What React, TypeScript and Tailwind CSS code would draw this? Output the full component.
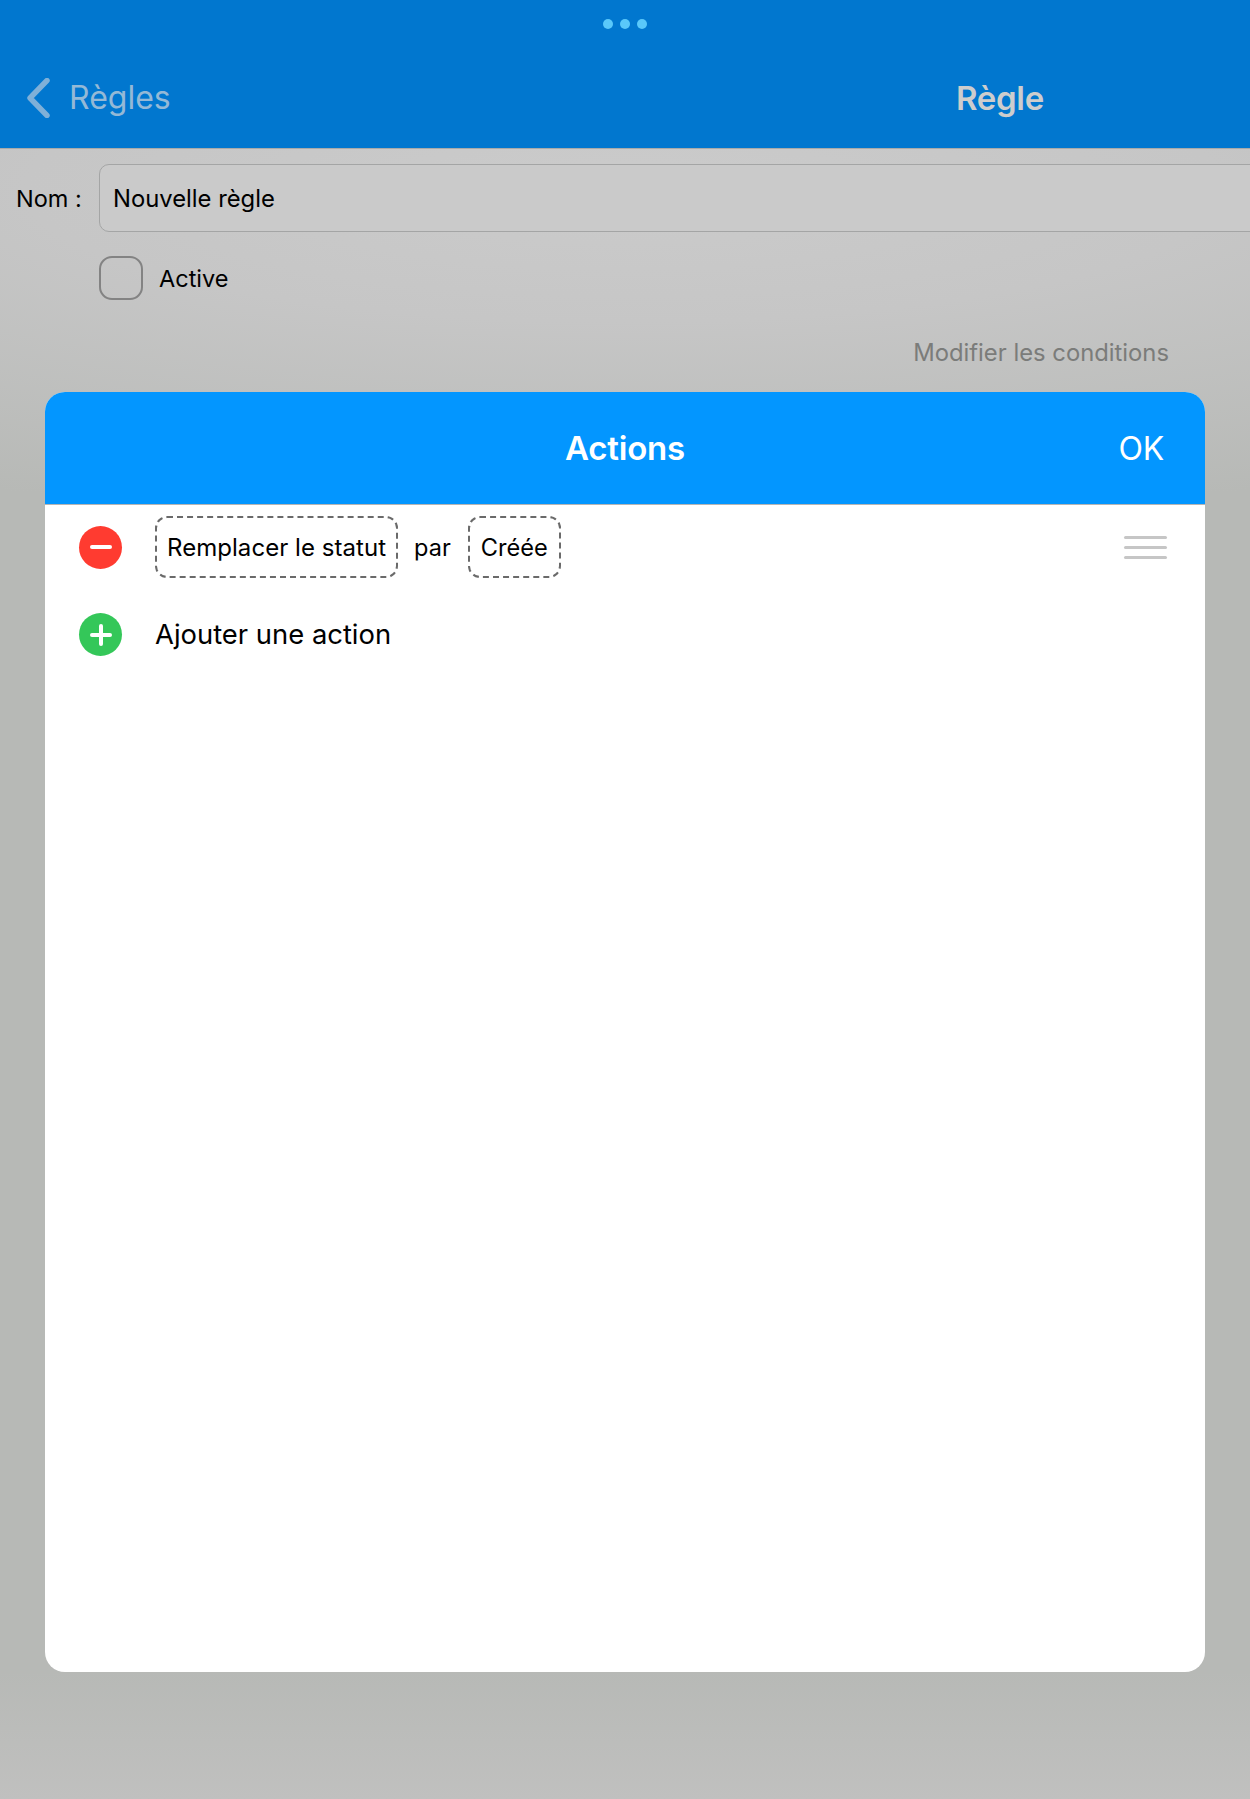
export default function App() {
  return (
    <div className="relative h-[1799px] w-[1250px] overflow-hidden font-['Inter',sans-serif] text-black bg-[linear-gradient(180deg,transparent_1672px,#c0c0bf_1799px),radial-gradient(ellipse_1500px_330px_at_50%_190px,#cbcbcb_0%,#c6c6c6_40%,#b7b9b6_100%)]">
      <header className="h-[149px] border-b border-[#a8aaaa] bg-[#0177cf]">
        <div className="flex justify-center gap-[7px] pt-[19px]">
          <span className="h-[10px] w-[10px] rounded-full bg-[#5ac8fa]" />
          <span className="h-[10px] w-[10px] rounded-full bg-[#5ac8fa]" />
          <span className="h-[10px] w-[10px] rounded-full bg-[#5ac8fa]" />
        </div>
        <div className="flex items-center pt-[49px]">
          <svg width="24" height="40" viewBox="0 0 24 40" className="ml-[26px]" fill="none">
            <path d="M21 2.5 L4 20 L21 37.5" stroke="#7fb0d8" strokeWidth="5.4" strokeLinecap="round" strokeLinejoin="round" />
          </svg>
          <span className="ml-[19px] w-[887px] text-[32px] leading-[40px] text-[#94b9d6]">Règles</span>
          <span className="text-[33px] leading-[40px] font-semibold tracking-[-0.3px] text-[#cdcdcd]">Règle</span>
        </div>
      </header>
      <div className="flex items-center pt-[15px]">
        <span className="ml-[16px] w-[83px] shrink-0 whitespace-nowrap pt-[2px] text-[23.5px] leading-[30px]">Nom :</span>
        <div className="flex h-[68px] w-[1200px] shrink-0 items-center rounded-[10px] border border-[#a4a5a5] bg-[#cacaca] pl-[13px] pt-[2px] text-[23.8px]">Nouvelle règle</div>
      </div>
      <div className="ml-[99px] flex items-center pt-[24px]">
        <span className="h-[44px] w-[44px] rounded-[13px] border-[2px] border-[#838383]" />
        <span className="ml-[16px] pt-[2px] text-[23.5px]">Active</span>
      </div>
      <div className="flex justify-end pr-[81px] pt-[38px] text-[23.8px] leading-[30px] text-[#7b7c7a]">Modifier les conditions</div>

      <div className="absolute left-[45px] top-[392px] flex h-[1280px] w-[1160px] flex-col overflow-hidden rounded-[20px] bg-white">
        <div className="relative flex h-[113px] shrink-0 items-center justify-center border-b border-[#b5b5b5] bg-[#0396ff] pt-[2px] text-white">
          <span className="text-[33px] font-semibold tracking-[-0.2px]">Actions</span>
          <span className="absolute right-[41px] text-[32px] tracking-[-0.2px]">OK</span>
        </div>
        <div className="flex items-center pt-[11px]">
          <span className="ml-[34px] flex h-[43px] w-[43px] items-center justify-center rounded-full bg-[#ff3b30]">
            <span className="h-[4px] w-[22px] rounded-full bg-white" />
          </span>
          <span className="ml-[33px] flex h-[62px] items-center rounded-[12px] border-[2px] border-dashed border-[#6a6a6a] px-[10px] pt-[2px] text-[24px] tracking-[0.05px]">Remplacer le statut</span>
          <span className="ml-[16px] pt-[2px] text-[23.5px]">par</span>
          <span className="ml-[17px] flex h-[62px] items-center rounded-[12px] border-[2px] border-dashed border-[#6a6a6a] px-[11px] pt-[2px] text-[23.6px]">Créée</span>
          <span className="ml-auto mr-[38px] flex w-[43px] flex-col gap-[7px]">
            <span className="h-[3px] rounded-full bg-[#c6c6c6]" />
            <span className="h-[3px] rounded-full bg-[#c6c6c6]" />
            <span className="h-[3px] rounded-full bg-[#c6c6c6]" />
          </span>
        </div>
        <div className="flex items-center pt-[35px]">
          <span className="relative ml-[34px] flex h-[43px] w-[43px] items-center justify-center rounded-full bg-[#34c759]">
            <span className="h-[4px] w-[22px] rounded-full bg-white" />
            <span className="absolute h-[22px] w-[4px] rounded-full bg-white" />
          </span>
          <span className="ml-[33px] text-[27.4px]">Ajouter une action</span>
        </div>
      </div>
    </div>
  );
}
